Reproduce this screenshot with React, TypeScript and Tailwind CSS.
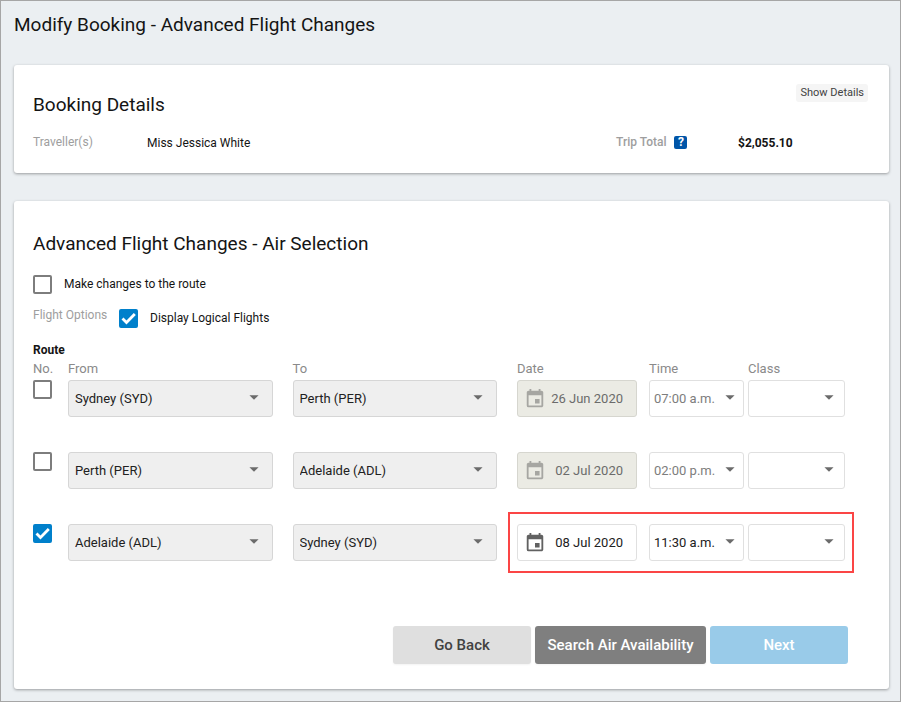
import React from 'react';
import { MdArrowDropDown, MdEvent } from 'react-icons/md';

type Leg = {
  from: string;
  to: string;
  date: string;
  time: string;
  selected: boolean;
};

const legs: Leg[] = [
  { from: 'Sydney (SYD)', to: 'Perth (PER)', date: '26 Jun 2020', time: '07:00 a.m.', selected: false },
  { from: 'Perth (PER)', to: 'Adelaide (ADL)', date: '02 Jul 2020', time: '02:00 p.m.', selected: false },
  { from: 'Adelaide (ADL)', to: 'Sydney (SYD)', date: '08 Jul 2020', time: '11:30 a.m.', selected: true },
];

const Checkbox: React.FC<React.InputHTMLAttributes<HTMLInputElement>> = (props) => (
  <span className="grid size-[19px] shrink-0">
    <input
      type="checkbox"
      className="peer col-start-1 row-start-1 appearance-none size-[19px] rounded-xs border-2 border-[#7d7d7d] bg-white checked:border-[#0080cb] checked:bg-[#0080cb]"
      {...props}
    />
    <svg
      viewBox="0 0 19 19"
      fill="none"
      className="col-start-1 row-start-1 size-[19px] stroke-white opacity-0 peer-checked:opacity-100 pointer-events-none"
    >
      <path d="M3.5 9.4l4 4 8.3-8.4" strokeWidth="2.8" />
    </svg>
  </span>
);

type SelectProps = {
  value: string;
  labelledBy: string;
  className: string;
  arrowClassName: string;
  disabled?: boolean;
};

const Select: React.FC<SelectProps> = ({ value, labelledBy, className, arrowClassName, disabled }) => (
  <div className="grid items-center">
    <select
      aria-labelledby={labelledBy}
      defaultValue={value}
      disabled={disabled}
      className={`col-start-1 row-start-1 appearance-none w-full h-[37px] rounded-[3px] border text-[13px] ${className}`}
    >
      <option>{value}</option>
    </select>
    <MdArrowDropDown
      className={`col-start-1 row-start-1 justify-self-end mb-1 size-[22px] text-[#6b6b6b] pointer-events-none ${arrowClassName}`}
    />
  </div>
);

const placeStyle = 'px-1.5 border-[#d6d6d6] bg-[#efefef] text-[#212121]';

const LegRow: React.FC<{ leg: Leg; index: number }> = ({ leg, index }) => (
  <div className="flex items-start">
    <div className="w-[35px] shrink-0">
      <Checkbox aria-label={`Route ${index + 1}`} defaultChecked={leg.selected} />
    </div>
    <div className="flex-1">
      <Select value={leg.from} labelledBy="from" className={placeStyle} arrowClassName="mr-2" disabled />
    </div>
    <div className="flex-1 ml-5">
      <Select value={leg.to} labelledBy="to" className={placeStyle} arrowClassName="mr-2" disabled />
    </div>
    <div className="relative flex ml-5">
      {/* Highlight around the editable leg */}
      {leg.selected && (
        <div className="absolute -inset-x-[9px] -inset-y-3 border-2 border-[#fb4545] pointer-events-none" />
      )}
      <div className="grid items-center w-[120px] mr-3">
        <input
          type="text"
          aria-labelledby="date"
          defaultValue={leg.date}
          disabled={!leg.selected}
          className="col-start-1 row-start-1 w-full h-[37px] rounded-[3px] border border-[#e0e0e0] bg-white pr-[13px] text-right text-[13px] text-[#212121] disabled:border-[#d6d6cf] disabled:bg-[#ebebe4] disabled:text-[#6b6b6b]"
        />
        <MdEvent
          className={`col-start-1 row-start-1 ml-[7px] size-[22px] pointer-events-none ${
            leg.selected ? 'text-[#616161]' : 'text-[#a6a6a2]'
          }`}
        />
      </div>
      <div className="w-[95px] mr-1">
        <Select
          value={leg.time}
          labelledBy="time"
          className="px-1 border-[#e0e0e0] bg-white text-[#212121] disabled:text-[#7d7d7d]"
          arrowClassName="mr-[3px]"
          disabled={!leg.selected}
        />
      </div>
      <div className="w-[97px]">
        <Select
          value=""
          labelledBy="class"
          className="px-1 border-[#e0e0e0] bg-white"
          arrowClassName="mr-[5px]"
          disabled={!leg.selected}
        />
      </div>
    </div>
  </div>
);

const App: React.FC = () => {
  return (
    <main className="min-h-screen border border-[#a6a6a6] bg-[#ebeff2] pl-[13px] pr-[11px] pb-3 font-['Roboto',sans-serif] text-xs leading-5 text-[#141414]">
      <h1 className="py-3 text-[19px] leading-6">Modify Booking - Advanced Flight Changes</h1>

      <section className="mt-4 rounded-[3px] bg-white px-[19px] pt-[19px] pb-5 shadow-[0_1px_3px_rgba(0,0,0,0.35)]">
        <div className="flex items-start justify-between pr-[2px]">
          <h2 className="mt-[9px] text-[19px] leading-6">Booking Details</h2>
          <button type="button" className="rounded-[3px] bg-[#f5f5f5] px-1 text-[11px] leading-[18px] text-[#424242]">
            Show Details
          </button>
        </div>
        <div className="mt-4 grid grid-cols-[114px_1fr_122px_132px] items-start">
          <span className="leading-[18px] text-[#9e9e9e]">Traveller(s)</span>
          <span>Miss Jessica White</span>
          <span className="flex items-center gap-2 leading-[18px] font-medium text-[#9e9e9e]">
            Trip Total
            <button
              type="button"
              aria-label="Trip total help"
              className="size-[13px] rounded-xs bg-[#0055a8] text-xs leading-[13px] font-bold text-white"
            >
              ?
            </button>
          </span>
          <span className="font-bold">$2,055.10</span>
        </div>
      </section>

      <section className="mt-7 rounded-[3px] bg-white pl-[19px] pr-[41px] pt-[31px] pb-[25px] shadow-[0_1px_3px_rgba(0,0,0,0.35)]">
        <h2 className="text-[19px] leading-6">Advanced Flight Changes - Air Selection</h2>

        <label className="mt-[18px] flex items-center gap-3">
          <Checkbox />
          Make changes to the route
        </label>

        <div className="mt-[14px] flex items-start">
          <span className="w-[86px] leading-[14px] text-[#9e9e9e]">Flight Options</span>
          <label className="flex items-center gap-3">
            <Checkbox defaultChecked />
            Display Logical Flights
          </label>
        </div>

        <h3 className="mt-3 font-bold">Route</h3>
        <div className="mb-0.5 mr-[3px] flex text-[13px] leading-[18px] text-[#8a8a8a]">
          <span className="w-[35px]">No.</span>
          <span id="from" className="flex-1">From</span>
          <span id="to" className="flex-1 ml-5">To</span>
          <span id="date" className="w-[120px] ml-5 mr-3">Date</span>
          <span id="time" className="w-[95px] mr-1">Time</span>
          <span id="class" className="w-[97px]">Class</span>
        </div>
        <div className="mr-[3px] flex flex-col gap-[35px]">
          {legs.map((leg, index) => (
            <LegRow key={leg.date} leg={leg} index={index} />
          ))}
        </div>

        <div className="mt-[65px] flex justify-end gap-1 text-[15px] font-medium">
          <button type="button" className="h-[38px] w-[138px] rounded-[3px] bg-[#dfdfdf] text-[#424242] shadow-xs">
            Go Back
          </button>
          <button type="button" className="h-[38px] w-[171px] rounded-[3px] bg-[#7f7f7f] text-white shadow-xs">
            Search Air Availability
          </button>
          <button type="button" className="h-[38px] w-[138px] rounded-[3px] bg-[#99cbe9] text-white">
            Next
          </button>
        </div>
      </section>
    </main>
  );
};

export default App;
